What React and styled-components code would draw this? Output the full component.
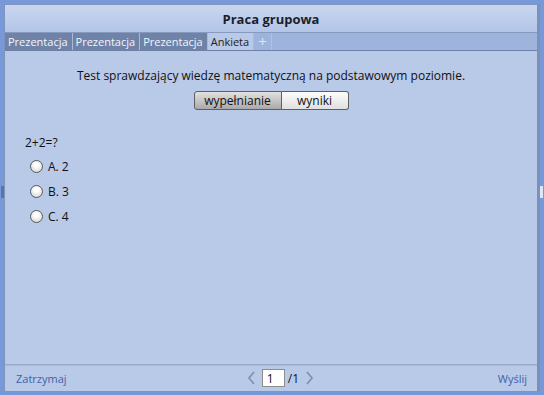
import React, { useState } from 'react';
import styled, { createGlobalStyle } from 'styled-components';

const GlobalStyle = createGlobalStyle`
  html, body {
    margin: 0;
    padding: 0;
    background: #7b9ad8;
  }
  * {
    box-sizing: border-box;
  }
`;

const Frame = styled.div`
  width: 544px;
  height: 395px;
  background: #7799d9;
  padding: 4px 4px 3px 4px;
  position: relative;
  font-family: "Open Sans", "Liberation Sans", sans-serif;
`;

const Panel = styled.div`
  height: 100%;
  display: flex;
  flex-direction: column;
  border: 1px solid #7f93bb;
  border-right: 3px solid #7d90b8;
  background: #b9c9e8;
`;

const TitleBar = styled.div`
  height: 28px;
  flex: none;
  display: flex;
  align-items: center;
  justify-content: center;
  background: linear-gradient(#c9d6ef, #b3c5e7);
  border-bottom: 1px solid #8799bd;
  font-size: 13px;
  font-weight: 700;
  color: #1b1f2a;
`;

const TabBar = styled.div`
  height: 18px;
  flex: none;
  display: flex;
  align-items: stretch;
  background: #9fb4dc;
  border-bottom: 1px solid #6d80a6;
`;

const Tab = styled.div`
  display: flex;
  align-items: center;
  padding: 0 4px 0 3px;
  font-size: 11px;
  border-right: 1px solid #a9b9d6;
  color: ${p => (p.$active ? '#222' : '#f2f5fb')};
  background: ${p => (p.$active ? '#b9c9e8' : '#6f83a9')};
`;

const AddTab = styled.div`
  display: flex;
  align-items: center;
  padding: 0 4px;
  font-size: 15px;
  line-height: 1;
  color: #dde4f2;
  border-right: 1px solid #b4c2dc;
`;

const Content = styled.div`
  flex: 1;
  display: flex;
  flex-direction: column;
  padding: 17px 20px 0;
`;

const Description = styled.div`
  text-align: center;
  font-size: 12px;
  color: #111;
  line-height: 16px;
`;

const Segments = styled.div`
  display: flex;
  justify-content: center;
  margin-top: 7px;
`;

const Segment = styled.button`
  height: 19px;
  width: ${p => p.$w}px;
  padding: 0;
  font-family: inherit;
  font-size: 12px;
  color: #111;
  border: 1px solid #5f5f5f;
  background: ${p => (p.$pressed
    ? 'linear-gradient(#e2e2e2, #a9a9a9)'
    : 'linear-gradient(#fdfdfd, #e0e0e0)')};
  &:first-child {
    border-radius: 3px 0 0 3px;
  }
  &:last-child {
    border-left: none;
    border-radius: 0 3px 3px 0;
  }
`;

const Question = styled.div`
  margin-top: 24px;
  font-size: 12px;
  color: #111;
`;

const Options = styled.div`
  display: flex;
  flex-direction: column;
  gap: 9px;
  margin-top: 7px;
  padding-left: 5px;
`;

const Option = styled.label`
  display: flex;
  align-items: center;
  gap: 5px;
  font-size: 12px;
  color: #111;
  height: 16px;
`;

const Radio = styled.span`
  width: 13px;
  height: 13px;
  border-radius: 50%;
  border: 1px solid #5a5a5a;
  background: radial-gradient(circle at 50% 35%, #ffffff 20%, #d4d4d4 90%);
`;

const Footer = styled.div`
  height: 27px;
  flex: none;
  display: grid;
  grid-template-columns: 1fr auto 1fr;
  align-items: center;
  padding: 0 10px 0 11px;
  border-top: 1px solid #9aaccb;
  box-shadow: inset 0 1px 0 #a8b9d8;
`;

const FooterLink = styled.span`
  font-size: 11px;
  color: #3d63a8;
  justify-self: ${p => (p.$right ? 'end' : 'start')};
`;

const Pager = styled.div`
  display: flex;
  align-items: center;
  gap: 3px;
  margin-left: 18px;
  font-size: 12px;
  color: #111;
`;

const PageInput = styled.input`
  width: 23px;
  height: 18px;
  padding: 0 4px;
  font-family: inherit;
  font-size: 12px;
  border: 1px solid #8d8d8d;
  background: #fff;
  color: #111;
`;

const Handle = styled.div`
  position: absolute;
  width: 3px;
  height: 12px;
  top: 186px;
  left: ${p => (p.$right ? '540px' : '1px')};
  background: ${p => (p.$right ? '#dce6f6' : '#5a74a8')};
`;

const Chevron = ({ dir }) => (
  <svg width="14" height="16" viewBox="0 0 14 16">
    <path
      d={dir === 'left' ? 'M9 2 L4 8 L9 14' : 'M5 2 L10 8 L5 14'}
      fill="none"
      stroke="#7f92b4"
      strokeWidth="1.8"
    />
  </svg>
);

const tabs = ['Prezentacja', 'Prezentacja', 'Prezentacja'];
const answers = ['A. 2', 'B. 3', 'C. 4'];

export default function App() {
  const [mode, setMode] = useState('fill');

  return (
    <>
      <GlobalStyle />
      <Frame>
        <Handle />
        <Handle $right />
        <Panel>
          <TitleBar>Praca grupowa</TitleBar>
          <TabBar>
            {tabs.map((t, i) => (
              <Tab key={i}>{t}</Tab>
            ))}
            <Tab $active>Ankieta</Tab>
            <AddTab>+</AddTab>
          </TabBar>
          <Content>
            <Description>Test sprawdzający wiedzę matematyczną na podstawowym poziomie.</Description>
            <Segments>
              <Segment $w={88} $pressed={mode === 'fill'} onClick={() => setMode('fill')}>
                wypełnianie
              </Segment>
              <Segment $w={67} $pressed={mode === 'results'} onClick={() => setMode('results')}>
                wyniki
              </Segment>
            </Segments>
            <Question>2+2=?</Question>
            <Options>
              {answers.map(a => (
                <Option key={a}>
                  <Radio />
                  {a}
                </Option>
              ))}
            </Options>
          </Content>
          <Footer>
            <FooterLink>Zatrzymaj</FooterLink>
            <Pager>
              <Chevron dir="left" />
              <PageInput defaultValue="1" />
              <span>/1</span>
              <Chevron dir="right" />
            </Pager>
            <FooterLink $right>Wyślij</FooterLink>
          </Footer>
        </Panel>
      </Frame>
    </>
  );
}
